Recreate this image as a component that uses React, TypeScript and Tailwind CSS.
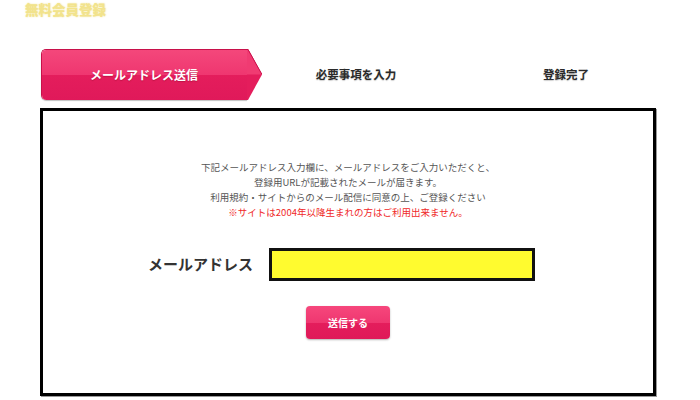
import React from 'react';

const font = { fontFamily: '"Noto Sans CJK JP", "Noto Sans", sans-serif' };

function StepTab({ label }: { label: string }) {
  return (
    <div className="relative flex h-[51px] w-[221px]">
      <div className="flex h-full w-[206px] flex-col overflow-hidden rounded-l-[5px] border-t border-l border-[#c8104a] shadow-[0_1px_1px_rgba(0,0,0,0.25)]">
        <div className="h-1/2 bg-gradient-to-b from-[#f4477b] to-[#ef3670]" />
        <div className="h-1/2 bg-gradient-to-b from-[#e41d5c] to-[#e0195a]" />
      </div>
      <svg width="15" height="51" viewBox="0 0 15 51" className="shrink-0">
        <polygon points="0,0 1,0 15,25.5 1,51 0,51" fill="#e41d5c" />
        <polygon points="0,0 1,0 15,25.5 0,25.5" fill="#f03b72" />
        <polyline points="0,0.5 1,0.5 15,25.5" fill="none" stroke="#c8104a" strokeWidth="1" />
      </svg>
      <span className="absolute left-0 top-0 flex h-full w-[206px] items-center justify-center text-[12px] font-bold text-white [text-shadow:0_1px_1px_rgba(120,0,30,0.35)]">
        {label}
      </span>
    </div>
  );
}

function Step({ label }: { label: string }) {
  return (
    <div className="flex h-[51px] w-[210px] items-center justify-center text-[11.5px] font-bold text-[#2a2a2a] [text-shadow:0_1px_1px_rgba(0,0,0,0.2)]">
      {label}
    </div>
  );
}

export default function App() {
  return (
    <div className="h-[400px] w-[700px] overflow-hidden bg-white" style={font}>
      <div className="pl-[25px] pt-[2px] text-[13.5px] font-black leading-[15px] text-[#f2e38c] [text-shadow:0_0_2px_#f4e9a8]">
        無料会員登録
      </div>

      <div className="ml-[41px] mt-[32px] flex">
        <div className="w-[210px]">
          <StepTab label="メールアドレス送信" />
        </div>
        <Step label="必要事項を入力" />
        <Step label="登録完了" />
      </div>

      <div className="ml-[40px] mt-[8px] h-[288px] w-[616px] border-[3px] border-black shadow-[1px_1px_0_#9a9a9a]">
        <div className="pt-[49px] text-center text-[9.5px] leading-[15px] text-[#555]">
          <p>下記メールアドレス入力欄に、メールアドレスをご入力いただくと、</p>
          <p>登録用URLが記載されたメールが届きます。</p>
          <p>利用規約・サイトからのメール配信に同意の上、ご登録ください</p>
          <p className="text-[#f02828]">※サイトは2004年以降生まれの方はご利用出来ません。</p>
        </div>

        <div className="ml-[105px] mt-[28px] flex items-center">
          <span className="w-[121px] text-[15px] font-bold text-[#333]">メールアドレス</span>
          <div className="h-[33px] w-[266px] border-[3px] border-[#111] bg-[#fffb2f]" />
        </div>

        <div className="mt-[25px] flex justify-center">
          <button className="flex h-[33px] w-[84px] flex-col overflow-hidden rounded-[4px] shadow-[0_1px_2px_rgba(0,0,0,0.3)]">
            <div className="relative flex h-full w-full flex-col">
              <div className="h-1/2 bg-gradient-to-b from-[#f6477c] to-[#ef3670]" />
              <div className="h-1/2 bg-gradient-to-b from-[#e41d5c] to-[#df1959]" />
              <span className="absolute inset-0 flex items-center justify-center text-[10px] font-bold text-white">
                送信する
              </span>
            </div>
          </button>
        </div>
      </div>
    </div>
  );
}
